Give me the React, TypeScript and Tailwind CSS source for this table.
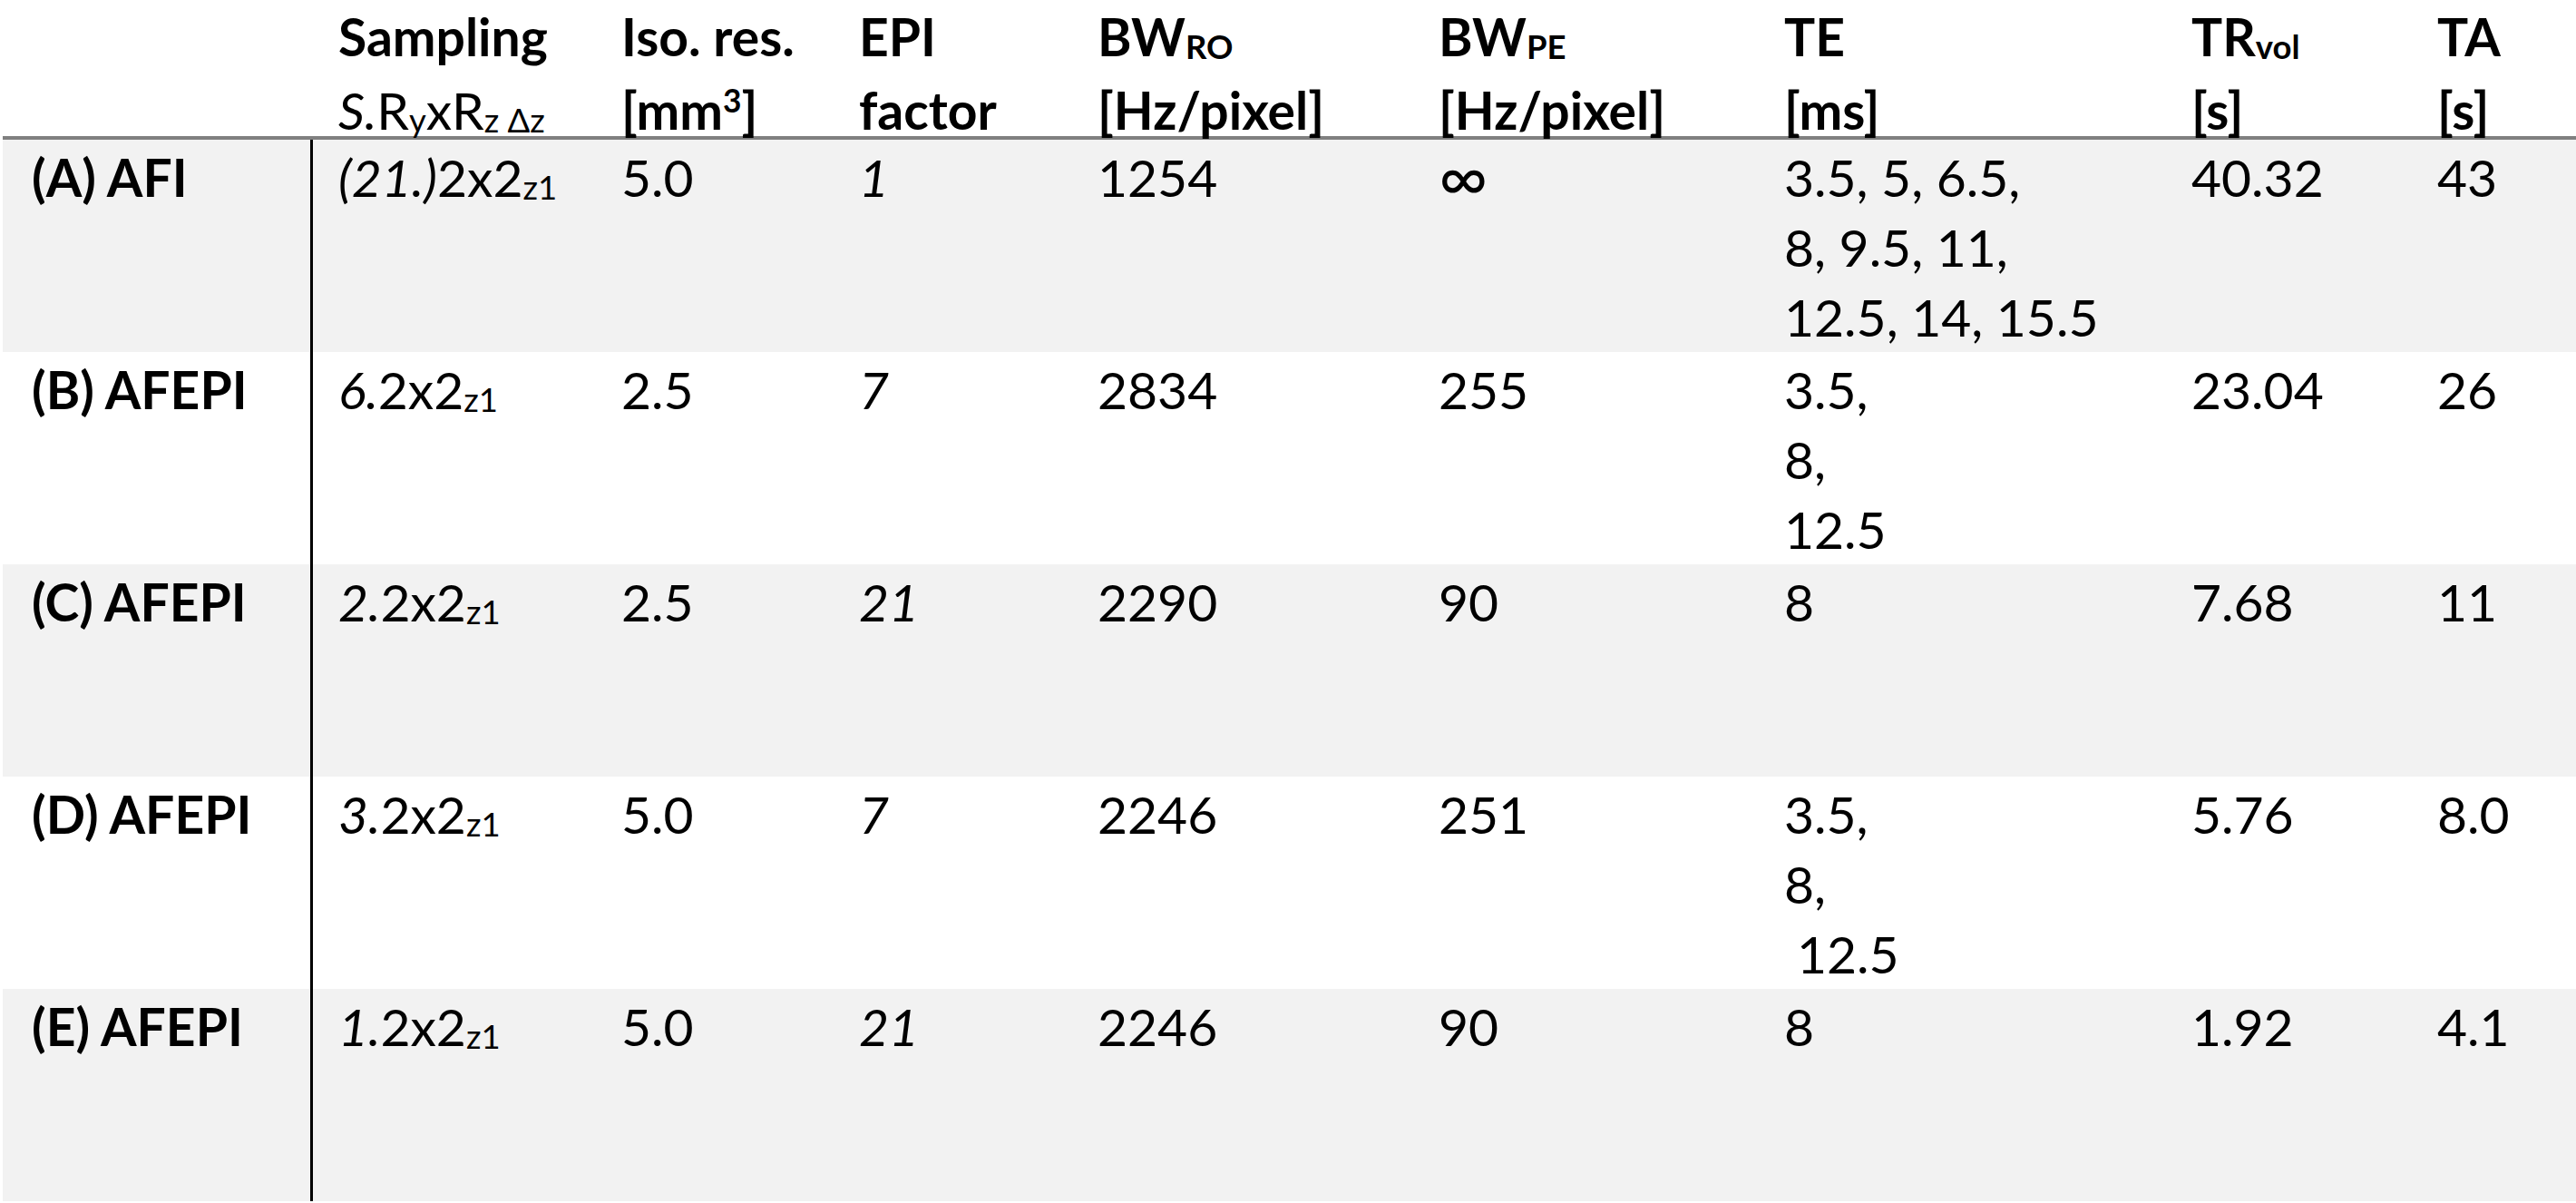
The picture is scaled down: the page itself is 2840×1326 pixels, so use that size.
import React from "react";

const grid =
  "grid grid-cols-[342px_312px_262px_263px_376px_381px_449px_271px_181px]";

function Sub({ children }: { children: React.ReactNode }) {
  return (
    <sub className="relative bottom-[-0.08em] align-baseline text-[0.64em] leading-none">
      {children}
    </sub>
  );
}

function Sup({ children }: { children: React.ReactNode }) {
  return (
    <sup className="relative top-[-0.55em] align-baseline text-[0.62em] leading-none">
      {children}
    </sup>
  );
}

function HeadCell({ children }: { children?: React.ReactNode }) {
  return <div className="pl-[28px] font-bold leading-[81px]">{children}</div>;
}

function Samp({ s, paren }: { s: string; paren?: boolean }) {
  return (
    <>
      {paren ? <i>({s})</i> : <i>{s}</i>}2x2<Sub>z1</Sub>
    </>
  );
}

type Row = {
  label: string;
  samp: React.ReactNode;
  iso: string;
  epi: string;
  ro: string;
  pe: React.ReactNode;
  te: React.ReactNode;
  tr: string;
  ta: string;
  shaded: boolean;
};

const rows: Row[] = [
  {
    label: "(A) AFI",
    samp: <Samp s="21." paren />,
    iso: "5.0",
    epi: "1",
    ro: "1254",
    pe: <span className="text-[1.3em] leading-none">∞</span>,
    te: (
      <>
        <div>3.5, 5, 6.5,</div>
        <div>8, 9.5, 11,</div>
        <div>12.5, 14, 15.5</div>
      </>
    ),
    tr: "40.32",
    ta: "43",
    shaded: true,
  },
  {
    label: "(B) AFEPI",
    samp: <Samp s="6." />,
    iso: "2.5",
    epi: "7",
    ro: "2834",
    pe: "255",
    te: (
      <>
        <div>3.5,</div>
        <div>8,</div>
        <div>12.5</div>
      </>
    ),
    tr: "23.04",
    ta: "26",
    shaded: false,
  },
  {
    label: "(C) AFEPI",
    samp: <Samp s="2." />,
    iso: "2.5",
    epi: "21",
    ro: "2290",
    pe: "90",
    te: <div>8</div>,
    tr: "7.68",
    ta: "11",
    shaded: true,
  },
  {
    label: "(D) AFEPI",
    samp: <Samp s="3." />,
    iso: "5.0",
    epi: "7",
    ro: "2246",
    pe: "251",
    te: (
      <>
        <div>3.5,</div>
        <div>8,</div>
        <div className="pl-[14px]">12.5</div>
      </>
    ),
    tr: "5.76",
    ta: "8.0",
    shaded: false,
  },
  {
    label: "(E) AFEPI",
    samp: <Samp s="1." />,
    iso: "5.0",
    epi: "21",
    ro: "2246",
    pe: "90",
    te: <div>8</div>,
    tr: "1.92",
    ta: "4.1",
    shaded: true,
  },
];

function Cell({ children }: { children?: React.ReactNode }) {
  return <div className="pl-[28px] pt-[3px]">{children}</div>;
}

export default function App() {
  return (
    <div className="w-[2840px] h-[1326px] overflow-hidden bg-white text-black font-[Lato,'Open_Sans',sans-serif] text-[57px] leading-[77px]">
      <div className="ml-[3px]">
        {/* Header */}
        <div
          className={`${grid} h-[154px] items-end pb-[12px] border-b-[4px] border-[#808080]`}
        >
          <div />
          <HeadCell>
            <div>Sampling</div>
            <div className="font-normal">
              <i>S.</i>R<Sub>y</Sub>xR<Sub>z Δz</Sub>
            </div>
          </HeadCell>
          <HeadCell>
            <div>Iso. res.</div>
            <div>
              [mm<Sup>3</Sup>]
            </div>
          </HeadCell>
          <HeadCell>
            <div>EPI</div>
            <div>factor</div>
          </HeadCell>
          <HeadCell>
            <div>
              BW<Sub>RO</Sub>
            </div>
            <div>[Hz/pixel]</div>
          </HeadCell>
          <HeadCell>
            <div>
              BW<Sub>PE</Sub>
            </div>
            <div>[Hz/pixel]</div>
          </HeadCell>
          <HeadCell>
            <div>TE</div>
            <div>[ms]</div>
          </HeadCell>
          <HeadCell>
            <div>
              TR<Sub>vol</Sub>
            </div>
            <div>[s]</div>
          </HeadCell>
          <HeadCell>
            <div>TA</div>
            <div>[s]</div>
          </HeadCell>
        </div>

        {/* Body */}
        {rows.map((r) => (
          <div
            key={r.label}
            className={`${grid} h-[234px] ${r.shaded ? "bg-[#f2f2f2]" : "bg-white"}`}
          >
            <div className="pl-[32px] pt-[3px] font-bold border-r-[3px] border-black">
              {r.label}
            </div>
            <Cell>{r.samp}</Cell>
            <Cell>{r.iso}</Cell>
            <Cell>
              <i>{r.epi}</i>
            </Cell>
            <Cell>{r.ro}</Cell>
            <Cell>{r.pe}</Cell>
            <Cell>{r.te}</Cell>
            <Cell>{r.tr}</Cell>
            <Cell>{r.ta}</Cell>
          </div>
        ))}
      </div>
    </div>
  );
}
